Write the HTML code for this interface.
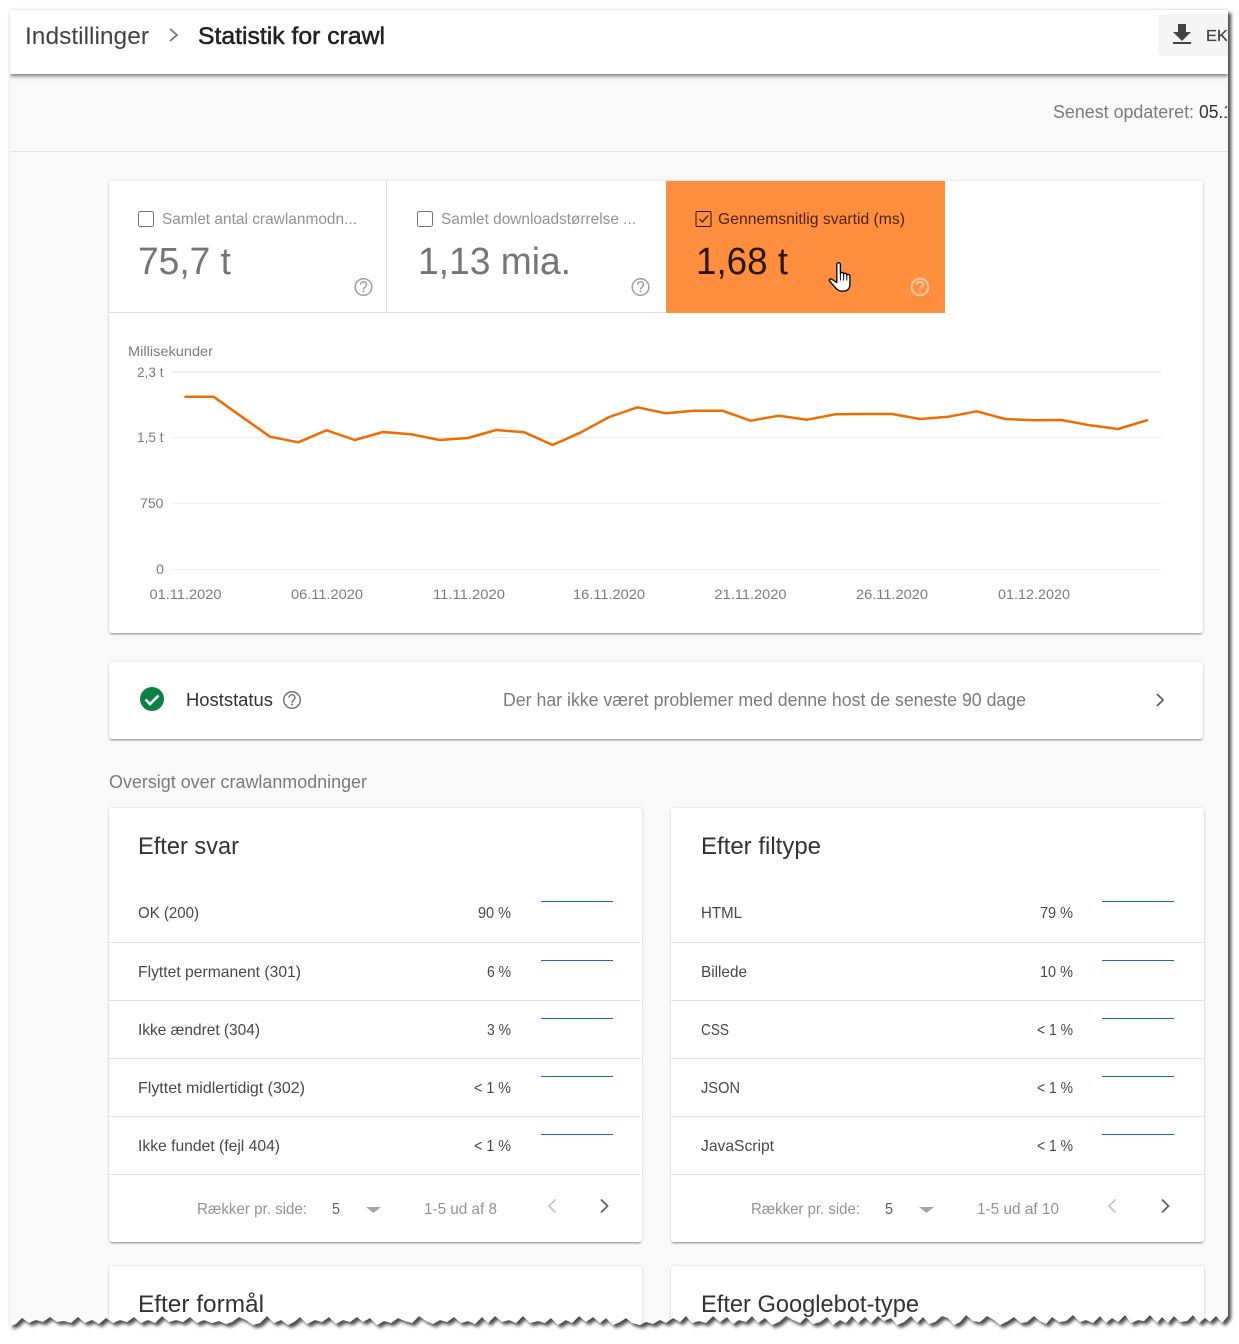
<!DOCTYPE html>
<html lang="da">
<head>
<meta charset="utf-8">
<title>Statistik for crawl</title>
<style>
html,body{margin:0;padding:0;background:#fff;width:1239px;height:1344px;overflow:hidden}
#wrap{position:absolute;left:0;top:0;width:1239px;height:1344px;overflow:hidden}
#shadow{position:absolute;left:0;top:0;width:1239px;height:1344px;filter:drop-shadow(3px 3px 1.5px rgba(0,0,0,.65)) drop-shadow(0 0 1.5px rgba(0,0,0,.2))}
#page{position:absolute;left:0;top:0;width:1239px;height:1344px;overflow:hidden;
clip-path:polygon(10px 10px,1228px 10px,1228px 1316px,1222px 1323px,1216px 1316px,1210px 1322px,1205px 1318px,1199px 1323px,1193px 1315px,1187px 1321px,1180px 1322px,1174px 1316px,1168px 1323px,1162px 1317px,1157px 1323px,1150px 1315px,1144px 1321px,1138px 1320px,1131px 1323px,1125px 1315px,1118px 1322px,1112px 1318px,1106px 1323px,1100px 1316px,1093px 1323px,1086px 1320px,1080px 1322px,1073px 1315px,1066px 1321px,1059px 1322px,1052px 1317px,1046px 1324px,1040px 1321px,1034px 1316px,1027px 1322px,1021px 1323px,1014px 1317px,1008px 1321px,1000px 1325px,994px 1320px,987px 1316px,980px 1322px,973px 1321px,966px 1315px,960px 1322px,954px 1325px,948px 1318px,942px 1316px,935px 1322px,929px 1324px,923px 1317px,917px 1323px,911px 1316px,904px 1322px,897px 1325px,891px 1318px,884px 1321px,878px 1316px,871px 1323px,865px 1317px,858px 1323px,852px 1316px,846px 1323px,840px 1320px,833px 1325px,827px 1317px,820px 1322px,813px 1324px,806px 1317px,800px 1323px,793px 1320px,786px 1316px,779px 1322px,772px 1325px,765px 1318px,758px 1323px,752px 1316px,746px 1322px,739px 1320px,733px 1324px,727px 1317px,720px 1322px,713px 1316px,706px 1323px,699px 1321px,692px 1323px,686px 1316px,680px 1322px,673px 1318px,666px 1323px,660px 1320px,653px 1324px,646px 1322px,640px 1325px,632px 1323px,626px 1318px,620px 1322px,613px 1325px,606px 1318px,600px 1323px,593px 1317px,586px 1322px,579px 1316px,572px 1323px,566px 1320px,558px 1325px,551px 1318px,545px 1323px,538px 1321px,530px 1323px,523px 1316px,516px 1323px,509px 1320px,502px 1322px,495px 1316px,488px 1323px,482px 1317px,475px 1324px,468px 1321px,461px 1323px,454px 1317px,447px 1322px,440px 1320px,433px 1324px,426px 1321px,419px 1316px,412px 1323px,405px 1321px,398px 1318px,391px 1323px,384px 1321px,377px 1325px,370px 1318px,363px 1322px,357px 1317px,350px 1322px,343px 1320px,336px 1324px,329px 1317px,322px 1322px,315px 1320px,307px 1324px,300px 1317px,294px 1322px,288px 1325px,281px 1320px,274px 1323px,267px 1316px,260px 1323px,253px 1325px,246px 1320px,239px 1317px,232px 1322px,226px 1324px,219px 1321px,212px 1323px,204px 1320px,197px 1323px,190px 1317px,183px 1322px,176px 1320px,169px 1322px,162px 1316px,155px 1323px,148px 1320px,141px 1323px,134px 1317px,127px 1322px,120px 1320px,113px 1323px,106px 1318px,99px 1324px,92px 1320px,85px 1323px,78px 1317px,71px 1323px,64px 1321px,57px 1322px,50px 1317px,43px 1322px,36px 1320px,29px 1323px,22px 1318px,16px 1324px,10px 1326px);background:#f9f9f9}
.b{position:absolute;box-sizing:border-box}
.card{background:#fff;border-radius:3px;box-shadow:0 2px 2px -1px rgba(0,0,0,.42),0 0 3px rgba(0,0,0,.13)}
svg{position:absolute;left:0;top:0}
text{font-family:"Liberation Sans",Arial,sans-serif}
.s16{font-size:16px;fill:#484848}
.r{font-size:16px;fill:#929292}
.ax{font-size:14px;fill:#7b7b7b}
.g18{font-size:18px;fill:#7b7b7b}
.t{font-size:24px;fill:#333}
</style>
</head>
<body>
<div id="wrap"><div id="shadow"><div id="page">
<div class="b" style="left:10px;top:151px;width:1218px;height:1px;background:#e0e0e0"></div>
<div class="b" style="left:10px;top:10px;width:1218px;height:64px;background:#fff;box-shadow:0 2px 4px rgba(0,0,0,.55)"></div>
<div class="b" style="left:1158px;top:14px;width:76px;height:42px;background:#f5f5f5;border-radius:4px"></div>

<div class="b card" style="left:109px;top:181px;width:1094px;height:452px"></div>
<div class="b" style="left:109px;top:312px;width:557px;height:1px;background:#e0e0e0"></div>
<div class="b" style="left:386px;top:181px;width:1px;height:132px;background:#e0e0e0"></div>
<div class="b" style="left:666px;top:181px;width:279px;height:132px;background:#ff8f3e"></div>

<div class="b card" style="left:109px;top:662px;width:1094px;height:77px"></div>

<div class="b card" style="left:109px;top:808px;width:533px;height:434px"></div>
<div class="b card" style="left:671px;top:808px;width:533px;height:434px"></div>
<div class="b card" style="left:109px;top:1266px;width:533px;height:78px"></div>
<div class="b card" style="left:671px;top:1266px;width:533px;height:78px"></div>

<svg width="1239" height="1344" viewBox="0 0 1239 1344">
<defs><clipPath id="c"><rect x="10" y="10" width="1217" height="1320"/></clipPath></defs>
<g clip-path="url(#c)">
<text x="25" y="44" font-size="24" fill="#424242" textLength="124" lengthAdjust="spacingAndGlyphs">Indstillinger</text>
<path d="M170 29l7 6-7 6" fill="none" stroke="#757575" stroke-width="1.8"/>
<text x="198" y="44" font-size="24" fill="#212121" stroke="#212121" stroke-width=".5" textLength="187" lengthAdjust="spacingAndGlyphs">Statistik for crawl</text>
<path d="M1178 24h8v8h5l-9 9-9-9h5z" fill="#444"/><rect x="1173" y="42" width="18" height="2" fill="#444"/>
<text x="1206" y="41" font-size="16" fill="#444" stroke="#444" stroke-width=".25" textLength="22" lengthAdjust="spacingAndGlyphs">EK</text>
<text x="1053" y="118" class="g18" textLength="141" lengthAdjust="spacingAndGlyphs">Senest opdateret:</text>
<text x="1199" y="118" font-size="18" fill="#333" textLength="34" lengthAdjust="spacingAndGlyphs">05.1</text>
</g>

<rect x="138.5" y="211.5" width="15" height="15" rx="2" fill="none" stroke="#757575"/>
<text x="162" y="224" class="r" textLength="195" lengthAdjust="spacingAndGlyphs">Samlet antal crawlanmodn...</text>
<text x="138" y="274" font-size="38" fill="#757575" textLength="93" lengthAdjust="spacingAndGlyphs">75,7 t</text>
<rect x="417.5" y="211.5" width="15" height="15" rx="2" fill="none" stroke="#757575"/>
<text x="441" y="224" class="r" textLength="195" lengthAdjust="spacingAndGlyphs">Samlet downloadstørrelse ...</text>
<text x="418" y="274" font-size="38" fill="#757575" textLength="153" lengthAdjust="spacingAndGlyphs">1,13 mia.</text>
<rect x="696" y="211.5" width="15" height="15" rx="1" fill="none" stroke="#2b1608"/>
<path d="M699.5 219l3 3 5.500-6.500" fill="none" stroke="#2b1608" stroke-width="1.200"/>
<text x="718" y="224" font-size="16" fill="#4a2208" textLength="187" lengthAdjust="spacingAndGlyphs">Gennemsnitlig svartid (ms)</text>
<text x="696" y="274" font-size="38" fill="#2b1608" textLength="92" lengthAdjust="spacingAndGlyphs">1,68 t</text>

<g fill="none" stroke="#9e9e9e" stroke-width="1.500">
<circle cx="363.500" cy="287" r="8.300"/><path d="M360.500 284.800c0-4 6-4 6 0 0 2.200-3 2.300-3 4.800"/>
<circle cx="640.500" cy="287" r="8.300"/><path d="M637.500 284.800c0-4 6-4 6 0 0 2.200-3 2.300-3 4.800"/>
</g>
<circle cx="363.500" cy="291.500" r="1" fill="#9e9e9e"/><circle cx="640.500" cy="291.500" r="1" fill="#9e9e9e"/>
<g fill="none" stroke="#ffc79d" stroke-width="2">
<circle cx="920" cy="287" r="8.300"/><path d="M917 284.800c0-4 6-4 6 0 0 2.200-3 2.300-3 4.800"/>
</g>
<circle cx="920" cy="291.800" r="1.100" fill="#ffc79d"/>

<path d="M836.800 264.500a1.800 1.800 0 0 1 3.600 0v9.500a1.600 1.600 0 0 1 3.200 0v.8a1.600 1.600 0 0 1 3.200 0v.8a1.600 1.600 0 0 1 3.100 .2v8.400c0 4.500-2.800 6.900-6.200 6.900h-2.500c-3 0-4.800-2-6.500-4.300l-5-5.400c-1.200-1.600.8-3.300 2.500-2l4.600 3z" fill="#fff" stroke="#111" stroke-width="1.400" stroke-linejoin="round"/>
<path d="M840.400 274v6.500M843.600 275v5.500M846.800 275.800v4.700" stroke="#111" stroke-width="1" fill="none"/>

<text x="128" y="356" class="ax" textLength="85" lengthAdjust="spacingAndGlyphs">Millisekunder</text>
<rect x="171" y="371" width="990" height="2" fill="#eeeeee"/>
<rect x="171" y="437" width="990" height="1" fill="#eeeeee"/>
<rect x="171" y="503" width="990" height="1" fill="#eeeeee"/>
<rect x="171" y="569" width="990" height="1" fill="#eeeeee"/>
<text x="137" y="377" class="ax" textLength="26.500" lengthAdjust="spacingAndGlyphs">2,3 t</text>
<text x="137" y="442" class="ax" textLength="26.500" lengthAdjust="spacingAndGlyphs">1,5 t</text>
<text x="140" y="508" class="ax" textLength="23.500" lengthAdjust="spacingAndGlyphs">750</text>
<text x="156" y="574" class="ax" textLength="8" lengthAdjust="spacingAndGlyphs">0</text>
<text x="149.500" y="599" class="ax" textLength="72" lengthAdjust="spacingAndGlyphs">01.11.2020</text>
<text x="291" y="599" class="ax" textLength="72" lengthAdjust="spacingAndGlyphs">06.11.2020</text>
<text x="433" y="599" class="ax" textLength="72" lengthAdjust="spacingAndGlyphs">11.11.2020</text>
<text x="573" y="599" class="ax" textLength="72" lengthAdjust="spacingAndGlyphs">16.11.2020</text>
<text x="714.500" y="599" class="ax" textLength="72" lengthAdjust="spacingAndGlyphs">21.11.2020</text>
<text x="856" y="599" class="ax" textLength="72" lengthAdjust="spacingAndGlyphs">26.11.2020</text>
<text x="998" y="599" class="ax" textLength="72" lengthAdjust="spacingAndGlyphs">01.12.2020</text>
<polyline fill="none" stroke="#ef6c00" stroke-width="2.500" stroke-linejoin="round" stroke-linecap="round" points="185.500,396.700 213.500,396.700 241.700,416.700 270,436.700 298.300,442.300 326.500,430.300 354.800,440 383.100,432 411.400,434.300 439.600,440 467.900,438 496.200,430 524.400,432.300 552.700,445 581,432.300 609.200,417 637.500,407.300 665.800,413.300 694.100,410.700 722.300,410.700 750.600,420.700 778.900,415.700 807.100,419.700 835.400,414.300 863.700,414 892,414 920.200,419 948.500,416.700 976.800,411.300 1005,419 1033.300,420.300 1061.600,420 1089.800,425.300 1118.100,429 1147,420.300"/>

<circle cx="152" cy="699" r="12" fill="#0d8043"/>
<path d="M145.500 699.500l4.500 4.500 8.500-8.500" fill="none" stroke="#fff" stroke-width="2.600"/>
<text x="186" y="706" font-size="18" fill="#333" textLength="87" lengthAdjust="spacingAndGlyphs">Hoststatus</text>
<g fill="none" stroke="#757575" stroke-width="1.500"><circle cx="292" cy="700" r="8.300"/><path d="M289 697.800c0-4 6-4 6 0 0 2.200-3 2.300-3 4.800"/></g>
<circle cx="292" cy="704.500" r="1" fill="#757575"/>
<text x="503" y="706" class="g18" textLength="523" lengthAdjust="spacingAndGlyphs">Der har ikke været problemer med denne host de seneste 90 dage</text>
<path d="M1157 694l6 6-6 6" fill="none" stroke="#616161" stroke-width="1.800"/>
<text x="109" y="788" class="g18" textLength="258" lengthAdjust="spacingAndGlyphs">Oversigt over crawlanmodninger</text>

<!-- left table -->
<text x="138" y="854" class="t" textLength="101" lengthAdjust="spacingAndGlyphs">Efter svar</text>
<g fill="#e0e0e0">
<rect x="109" y="942" width="532" height="1"/><rect x="109" y="1000" width="532" height="1"/><rect x="109" y="1058" width="532" height="1"/><rect x="109" y="1116" width="532" height="1"/><rect x="109" y="1174" width="532" height="1"/>
<rect x="671" y="942" width="532" height="1"/><rect x="671" y="1000" width="532" height="1"/><rect x="671" y="1058" width="532" height="1"/><rect x="671" y="1116" width="532" height="1"/><rect x="671" y="1174" width="532" height="1"/>
</g>
<g fill="#1a67c9">
<rect x="541" y="901" width="72" height="1"/><rect x="541" y="960" width="72" height="1"/><rect x="541" y="1018" width="72" height="1"/><rect x="541" y="1076" width="72" height="1"/><rect x="541" y="1134" width="72" height="1"/>
<rect x="1102" y="901" width="72" height="1"/><rect x="1102" y="960" width="72" height="1"/><rect x="1102" y="1018" width="72" height="1"/><rect x="1102" y="1076" width="72" height="1"/><rect x="1102" y="1134" width="72" height="1"/>
</g>
<text x="138" y="918" class="s16" textLength="61" lengthAdjust="spacingAndGlyphs">OK (200)</text>
<text x="478" y="918" class="s16" textLength="33" lengthAdjust="spacingAndGlyphs">90 %</text>
<text x="138" y="977" class="s16" textLength="163" lengthAdjust="spacingAndGlyphs">Flyttet permanent (301)</text>
<text x="487" y="977" class="s16" textLength="24" lengthAdjust="spacingAndGlyphs">6 %</text>
<text x="138" y="1035" class="s16" textLength="122" lengthAdjust="spacingAndGlyphs">Ikke ændret (304)</text>
<text x="487" y="1035" class="s16" textLength="24" lengthAdjust="spacingAndGlyphs">3 %</text>
<text x="138" y="1093" class="s16" textLength="167" lengthAdjust="spacingAndGlyphs">Flyttet midlertidigt (302)</text>
<text x="474" y="1093" class="s16" textLength="37" lengthAdjust="spacingAndGlyphs">&lt; 1 %</text>
<text x="138" y="1151" class="s16" textLength="142" lengthAdjust="spacingAndGlyphs">Ikke fundet (fejl 404)</text>
<text x="474" y="1151" class="s16" textLength="37" lengthAdjust="spacingAndGlyphs">&lt; 1 %</text>
<text x="197" y="1214" class="r" textLength="110" lengthAdjust="spacingAndGlyphs">Rækker pr. side:</text>
<text x="332" y="1214" font-size="16" fill="#616161" textLength="8" lengthAdjust="spacingAndGlyphs">5</text>
<path d="M366 1207h15l-7.500 6z" fill="#a6a6a6"/>
<text x="424" y="1214" class="r" textLength="73" lengthAdjust="spacingAndGlyphs">1-5 ud af 8</text>
<path d="M555.500 1199.500l-6.500 6.500 6.500 6.500" fill="none" stroke="#c4c4c4" stroke-width="1.800"/>
<path d="M601 1199.500l6.500 6.500-6.500 6.500" fill="none" stroke="#616161" stroke-width="1.800"/>

<!-- right table -->
<text x="701" y="854" class="t" textLength="120" lengthAdjust="spacingAndGlyphs">Efter filtype</text>
<text x="701" y="918" class="s16" textLength="41" lengthAdjust="spacingAndGlyphs">HTML</text>
<text x="1040" y="918" class="s16" textLength="33" lengthAdjust="spacingAndGlyphs">79 %</text>
<text x="701" y="977" class="s16" textLength="46" lengthAdjust="spacingAndGlyphs">Billede</text>
<text x="1040" y="977" class="s16" textLength="33" lengthAdjust="spacingAndGlyphs">10 %</text>
<text x="701" y="1035" class="s16" textLength="28" lengthAdjust="spacingAndGlyphs">CSS</text>
<text x="1037" y="1035" class="s16" textLength="36" lengthAdjust="spacingAndGlyphs">&lt; 1 %</text>
<text x="701" y="1093" class="s16" textLength="39" lengthAdjust="spacingAndGlyphs">JSON</text>
<text x="1037" y="1093" class="s16" textLength="36" lengthAdjust="spacingAndGlyphs">&lt; 1 %</text>
<text x="701" y="1151" class="s16" textLength="73" lengthAdjust="spacingAndGlyphs">JavaScript</text>
<text x="1037" y="1151" class="s16" textLength="36" lengthAdjust="spacingAndGlyphs">&lt; 1 %</text>
<text x="751" y="1214" class="r" textLength="109" lengthAdjust="spacingAndGlyphs">Rækker pr. side:</text>
<text x="885" y="1214" font-size="16" fill="#616161" textLength="8" lengthAdjust="spacingAndGlyphs">5</text>
<path d="M919 1207h15l-7.500 6z" fill="#a6a6a6"/>
<text x="977" y="1214" class="r" textLength="82" lengthAdjust="spacingAndGlyphs">1-5 ud af 10</text>
<path d="M1115.500 1199.500l-6.500 6.500 6.500 6.500" fill="none" stroke="#c4c4c4" stroke-width="1.800"/>
<path d="M1162 1199.500l6.500 6.500-6.500 6.500" fill="none" stroke="#616161" stroke-width="1.800"/>

<text x="138" y="1312" class="t" textLength="126" lengthAdjust="spacingAndGlyphs">Efter formål</text>
<text x="701" y="1312" class="t" textLength="218" lengthAdjust="spacingAndGlyphs">Efter Googlebot-type</text>
</svg>
</div></div></div>
</body>
</html>
